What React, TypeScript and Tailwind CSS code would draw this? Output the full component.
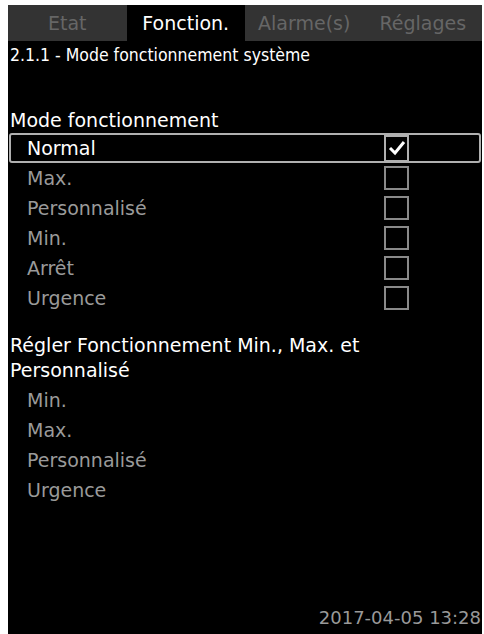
import React from 'react'

const tabs = ['Etat', 'Fonction.', 'Alarme(s)', 'Réglages']
const modes = [
  { label: 'Normal', checked: true },
  { label: 'Max.', checked: false },
  { label: 'Personnalisé', checked: false },
  { label: 'Min.', checked: false },
  { label: 'Arrêt', checked: false },
  { label: 'Urgence', checked: false },
]
const settings = ['Min.', 'Max.', 'Personnalisé', 'Urgence']

function Checkbox({ checked }: { checked: boolean }) {
  return (
    <div className={checked ? 'w-[25px] h-[27px] border-2 border-[#b0b0b0] flex items-center justify-center' : 'w-[25px] h-[24px] border-2 border-[#8a8a8a] flex items-center justify-center'}>
      {checked && (
        <svg width="18" height="16" viewBox="0 0 18 16">
          <path d="M2 8 L7 13 L16 2" stroke="#fff" strokeWidth="3" fill="none" />
        </svg>
      )}
    </div>
  )
}

function App() {
  return (
    <div className="w-[484px] h-[634px] bg-white pl-[8px] pr-[2px] pt-[5px]" style={{ fontFamily: '"DejaVu Sans", sans-serif' }}>
      <div className="h-full bg-black flex flex-col">
        <div className="flex h-[36px] bg-[#333333]">
          {tabs.map((t, i) => (
            <div
              key={t}
              className={
                i === 1
                  ? 'flex-1 flex items-center justify-center bg-black text-white text-[19px]'
                  : 'flex-1 flex items-center justify-center text-[#666666] text-[19px]'
              }
            >
              {t}
            </div>
          ))}
        </div>
        <div className="pl-[2px] pt-[4px] text-white text-[17.5px] leading-[20px]" style={{ fontFamily: '"DejaVu Sans Condensed", sans-serif' }}>
          2.1.1 - Mode fonctionnement système
        </div>
        <div className="pl-[2px] mt-[44px] text-white text-[19px] leading-[22px]">Mode fonctionnement</div>
        <div className="flex flex-col mr-[1px] mt-[2px]">
          {modes.map((m) => (
            <div
              key={m.label}
              className={
                m.checked
                  ? 'flex items-center h-[30px] border-2 border-[#b0b0b0] rounded-[3px] ml-[1px] pl-[16px]'
                  : 'flex items-center h-[30px] ml-[1px] pl-[18px]'
              }
            >
              <span className={m.checked ? 'flex-1 text-white text-[19px]' : 'flex-1 text-[#9a9a9a] text-[19px]'}>{m.label}</span>
              <div className={m.checked ? 'mr-[70px]' : 'mr-[72px]'}>
                <Checkbox checked={m.checked} />
              </div>
            </div>
          ))}
        </div>
        <div className="pl-[2px] mt-[20px] text-white text-[19px] leading-[25px]">
          Régler Fonctionnement Min., Max. et
          <br />
          Personnalisé
        </div>
        <div className="flex flex-col pl-[19px] mt-[2px]">
          {settings.map((s) => (
            <div key={s} className="h-[30px] flex items-center text-[#9a9a9a] text-[19px]">
              {s}
            </div>
          ))}
        </div>
        <div className="mt-auto self-end pr-[1px] pb-[3px] text-[#999999] text-[18px]">2017-04-05 13:28</div>
      </div>
    </div>
  )
}

export default App
